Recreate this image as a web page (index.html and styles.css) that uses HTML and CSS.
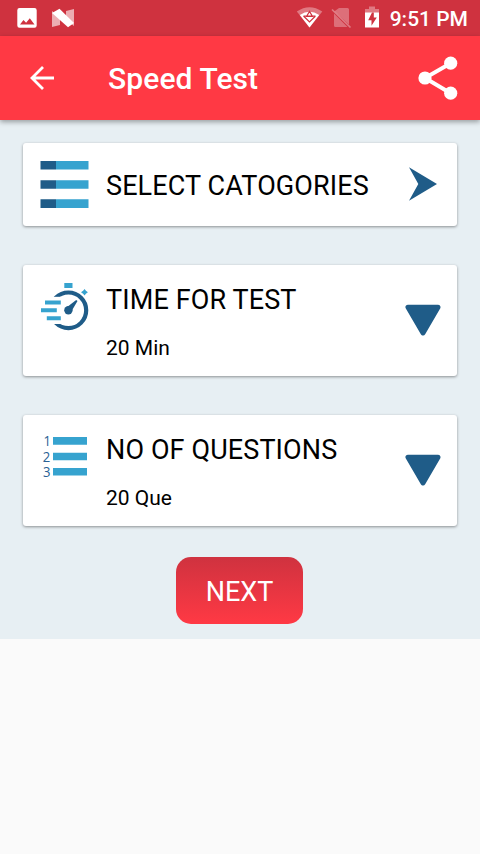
FILE: index.html
```html
<!DOCTYPE html>
<html lang="en">
<head>
<meta charset="utf-8">
<title>Speed Test</title>
<link rel="stylesheet" href="styles.css">
</head>
<body>
<div class="statusbar">
  <svg class="notifications" width="80" height="36" viewBox="0 0 80 36">
    <path fill="#fff" fill-rule="evenodd" d="M19.500 8h15a2.200 2.200 0 0 1 2.200 2.200v15.400a2.200 2.200 0 0 1-2.200 2.200h-15a2.200 2.200 0 0 1-2.200-2.200V10.200A2.200 2.200 0 0 1 19.500 8zM20 24.500h14.500l-4.700-6.300-3.700 4.600-2.600-2.900z"/>
    <path fill="#fff" opacity=".6" d="M52 11l8 6v8l-8 2zM74 9v17l-8-6v-9z"/>
    <path fill="#fff" d="M52 13l7.500-4.200L74 23l-6 4.200z"/>
  </svg>
  <svg class="system" width="92" height="36" viewBox="292 0 92 36">
    <path fill="#fff" opacity=".35" d="M296.800 11.500Q309.500 2.800 322.300 11.500L309.500 27.500z"/>
    <path fill="#fff" d="M299.800 15.100Q309.500 8.500 319.200 15.100L309.500 27.500z"/>
    <path fill="none" stroke="#cf323f" stroke-width="1.200" d="M309.500 11.500l-3 5h6zM303.500 16l6 6 6-6M303.500 16h12"/>
    <path fill="#fff" opacity=".3" d="M339 8h8.500a1.500 1.500 0 0 1 1.500 1.500v15L334.500 11.200zM334 13.500L347.500 27H335.500a1.500 1.500 0 0 1-1.500-1.500z"/>
    <path stroke="#fff" opacity=".35" stroke-width="1.700" d="M332 9.500L350.500 27.500"/>
    <path fill="#fff" opacity=".35" d="M369 6.500h6V9h4v4h-14V9h4z"/>
    <path fill="#fff" d="M365 12.500h14v15h-14z"/>
    <path fill="#cf323f" d="M373.800 12.500v5h3l-5.300 8.300v-5.600h-3.300l3.800-7.700z"/>
  </svg>
  <span class="clock">9:51 PM</span>
</div>
<header class="toolbar">
  <svg class="back" width="24" height="24" viewBox="0 0 24 24"><path fill="none" stroke="#fff" stroke-width="2.800" d="M24 12H2M13 1L2 12l11 11"/></svg>
  <h1 class="title">Speed Test</h1>
  <svg class="share" width="40" height="44" viewBox="0 0 40 44"><path fill="none" stroke="#fff" stroke-width="4" d="M32.700 7.200L7 22l25.700 15.200"/><g fill="#fff"><circle cx="32.700" cy="7.200" r="6.600"/><circle cx="7" cy="22" r="6.600"/><circle cx="32.700" cy="37.200" r="6.600"/></g></svg>
</header>
<main class="content">
  <section class="card card-single">
    <svg class="icon" width="50" height="50" viewBox="40 160 50 50">
      <path fill="#36a3cf" d="M56 161h32.500v8.600H56zM56 180.200h32.500v8.600H56zM56 199.300h32.500v8.600H56z"/>
      <path fill="#1f5c88" d="M40.500 161H56v8.600H40.500zM40.500 180.200H56v8.600H40.500zM40.500 199.300H56v8.600H40.500z"/>
    </svg>
    <div class="label">SELECT CATOGORIES</div>
    <svg class="marker" width="36" height="36" viewBox="405 166 36 36"><path fill="#1f5c88" d="M409 167.200L437 184 409 200.800l9.300-16.800z"/></svg>
  </section>
  <section class="card">
    <svg class="icon" width="50" height="50" viewBox="40 282 50 50">
      <circle cx="68.400" cy="310.300" r="17.800" fill="none" stroke="#1f5c88" stroke-width="4.200"/>
      <path fill="#fff" d="M46 296.800h15v27.200H46z"/>
      <circle cx="68.400" cy="310.200" r="4.200" fill="#1f5c88"/>
      <path fill="#1f5c88" d="M66.500 307.500L76.200 300l1.300 1L71 312z"/>
      <path fill="#36a3cf" d="M64.300 283h8.200v5h-8.200zM45 300.500h15.800v4H45zM41 308.300h15.800v4H41zM46.800 316.200h14v4h-14zM84.600 289l1.300 1.700 2 1.500-2 1.500-1.300 1.700-1.500-1.700-2.100-1.500 2.100-1.500z"/>
    </svg>
    <div class="label">TIME FOR TEST</div>
    <div class="value">20 Min</div>
    <svg class="marker" width="36" height="36" viewBox="405 302 36 36"><path fill="#1f5c88" stroke="#1f5c88" stroke-width="5" stroke-linejoin="round" d="M408 307.200h30L423 333z"/></svg>
  </section>
  <section class="card">
    <svg class="icon" width="50" height="50" viewBox="40 432 50 50">
      <g class="digits"><text x="43.400" y="445.500" textLength="7.500" lengthAdjust="spacingAndGlyphs">1</text><text x="42.700" y="461.500" textLength="7.500" lengthAdjust="spacingAndGlyphs">2</text><text x="43" y="476.800" textLength="7.500" lengthAdjust="spacingAndGlyphs">3</text></g>
      <path fill="#36a3cf" d="M53 437h34v7.700H53zM53 452.700h34v7.600H53zM53 467.900h34v7.700H53z"/>
    </svg>
    <div class="label">NO OF QUESTIONS</div>
    <div class="value">20 Que</div>
    <svg class="marker" width="36" height="36" viewBox="405 452 36 36"><path fill="#1f5c88" stroke="#1f5c88" stroke-width="5" stroke-linejoin="round" d="M408 457.200h30L423 483z"/></svg>
  </section>
  <button class="next">NEXT</button>
</main>
</body>
</html>
```
FILE: styles.css
```css
* { box-sizing: border-box; }
body {
  margin: 0;
  min-height: 854px;
  background: #fafafa;
  font-family: Roboto, "Liberation Sans", sans-serif;
  color: #000;
}
svg { display: block; flex: none; overflow: visible; }
.statusbar {
  display: flex;
  align-items: center;
  height: 36px;
  padding-right: 12px;
  background: #cf323f;
  color: #fff;
}
.system { margin-left: auto; }
.clock {
  margin-left: 6px;
  padding-top: 2px;
  font-size: 21px;
  font-weight: 500;
  line-height: 36px;
  white-space: nowrap;
}
.toolbar {
  position: relative;
  display: flex;
  align-items: center;
  height: 84px;
  padding: 0 22px 0 30px;
  background: #ff3944;
  color: #fff;
  box-shadow: 0 2px 5px rgba(0, 0, 0, .35);
}
.title {
  margin: 1px 0 0 54px;
  font-size: 30px;
  font-weight: 500;
  line-height: 40px;
  letter-spacing: .1px;
}
.share { margin-left: auto; }
.content {
  display: flex;
  flex-direction: column;
  align-items: center;
  gap: 39px;
  height: 519px;
  padding: 23px 23px 0;
  background: #e7eff3;
}
.card {
  display: grid;
  grid-template-columns: 66px 1fr 36px;
  grid-template-rows: 35px 35px;
  row-gap: 10px;
  width: 434px;
  height: 111px;
  padding: 17px 16px 0 17px;
  border-radius: 3px;
  background: #fff;
  box-shadow: 0 1px 3px rgba(0, 0, 0, .4);
}
.card-single { height: 83px; grid-template-rows: 50px; }
.icon { grid-row: 1 / 3; }
.card-single .icon { grid-row: 1; }
.label {
  padding-top: 1px;
  font-size: 27px;
  line-height: 35px;
  letter-spacing: .12px;
  white-space: nowrap;
}
.card-single .label { line-height: 50px; }
.value { grid-column: 2; padding-top: 1px; font-size: 21px; line-height: 40px; }
.marker { grid-column: 3; grid-row: 1 / 3; margin-top: 20px; }
.card-single .marker { grid-row: 1; margin-top: 6px; }
.digits { fill: #2a6295; font: 14.5px "Open Sans", sans-serif; }
.next {
  width: 127px;
  height: 67px;
  margin: -8px 1px 0 0;
  padding: 2px 0 0;
  border: 0;
  border-radius: 15px;
  background: linear-gradient(#cf323f, #ff3944);
  color: #fff;
  font: 27px Roboto, sans-serif;
}
```
